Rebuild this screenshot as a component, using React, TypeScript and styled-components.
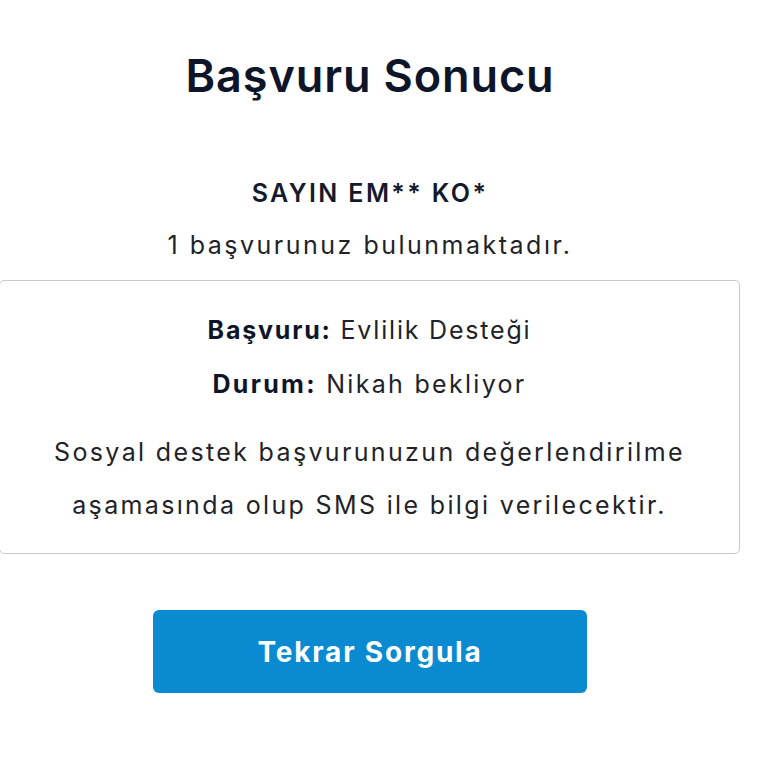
import React from "react";
import styled, { createGlobalStyle } from "styled-components";

const Global = createGlobalStyle`
  html, body { margin: 0; padding: 0; background: #ffffff; }
  body { font-family: Inter, "Noto Sans", "Liberation Sans", sans-serif; color: #1f2329; }
`;

const Page = styled.main`
  width: 740px;
  display: flex;
  flex-direction: column;
  align-items: center;
  padding-top: 48px;
`;

const Title = styled.h1`
  margin: 0;
  font-size: 45px;
  line-height: 56px;
  font-weight: 600;
  color: #0f1528;
  letter-spacing: 0.9px;
`;

const Greeting = styled.p`
  margin: 74px 0 0;
  font-size: 25px;
  line-height: 30px;
  font-weight: 600;
  color: #141a2b;
  letter-spacing: 2.4px;
`;

const Count = styled.p`
  margin: 22px 0 0;
  font-size: 25px;
  line-height: 30px;
  font-weight: 400;
  color: #1f2329;
  letter-spacing: 2.5px;
`;

const ResultCard = styled.section`
  box-sizing: border-box;
  width: 741px;
  margin-left: -1px;
  margin-top: 20px;
  height: 274px;
  border: 1px solid #c9c9c9;
  border-radius: 5px;
  display: flex;
  flex-direction: column;
  align-items: center;
  padding-top: 34px;
`;

const InfoLine = styled.p<{ $gap?: number; $spacing: number }>`
  margin: ${(p) => p.$gap ?? 0}px 0 0;
  font-size: 25px;
  line-height: 30px;
  color: #1f2329;
  letter-spacing: ${(p) => p.$spacing}px;
  b { font-weight: 700; color: #0f1528; }
`;

const Message = styled.p`
  margin: 27px 0 0;
  font-size: 25px;
  line-height: 53px;
  text-align: center;
  color: #1f2329;
  letter-spacing: 2.35px;
`;

const Button = styled.button`
  margin-top: 56px;
  width: 434px;
  height: 83px;
  border: none;
  border-radius: 6px;
  background: #0a8bd1;
  color: #ffffff;
  font-family: inherit;
  font-size: 28px;
  font-weight: 700;
  letter-spacing: 1.8px;
  cursor: pointer;
`;

export default function App() {
  return (
    <>
      <Global />
      <Page>
        <Title>Başvuru Sonucu</Title>
        <Greeting>SAYIN EM** KO*</Greeting>
        <Count>1 başvurunuz bulunmaktadır.</Count>
        <ResultCard>
          <InfoLine $spacing={1.8}>
            <b>Başvuru:</b> Evlilik Desteği
          </InfoLine>
          <InfoLine $gap={24} $spacing={2.3}>
            <b>Durum:</b> Nikah bekliyor
          </InfoLine>
          <Message>
            Sosyal destek başvurunuzun değerlendirilme
            <br />
            aşamasında olup SMS ile bilgi verilecektir.
          </Message>
        </ResultCard>
        <Button>Tekrar Sorgula</Button>
      </Page>
    </>
  );
}
